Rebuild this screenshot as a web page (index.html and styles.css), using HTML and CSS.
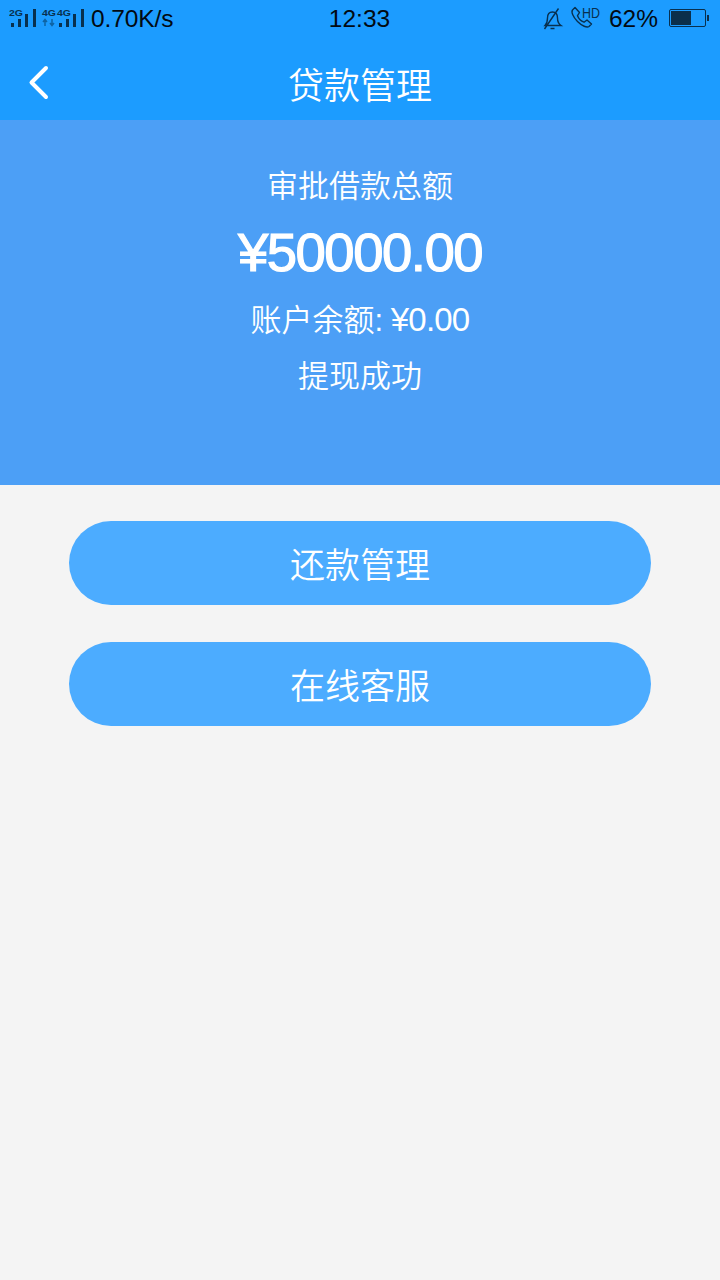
FILE: index.html
```html
<!DOCTYPE html>
<html lang="zh-CN">
<head>
  <meta charset="UTF-8" />
  <meta name="viewport" content="width=device-width, initial-scale=1.0"/>
  <title>贷款管理</title>
  <link rel="stylesheet" href="styles.css">
</head>
<body>
  <header class="top">
    <div class="status-bar">
      <div class="status-left">
        <svg class="signal" width="80" height="30" viewBox="0 0 80 30">
          <g fill="#08304f">
            <text x="0" y="12" textLength="14" lengthAdjust="spacingAndGlyphs">2G</text>
            <text x="33" y="12" textLength="14" lengthAdjust="spacingAndGlyphs">4G</text>
            <text x="48" y="12" textLength="14" lengthAdjust="spacingAndGlyphs">4G</text>
            <path d="M2 19h3v4H2zM9 15h3v8H9zM16 10h3v13h-3zM24 5h3v18h-3z"/>
            <path d="M50 19h3v4h-3zM57 15h3v8h-3zM64 10h3v13h-3zM72 5h3v18h-3z"/>
          </g>
          <path d="M36 22v-6M34 18l2-2.500 2 2.500M43 15v6M41 19l2 2.500 2-2.500" fill="none" stroke="#0e63a3" stroke-width="1.5"/>
        </svg>
        <span class="speed">0.70K/s</span>
      </div>
      <div class="clock">12:33</div>
      <div class="status-right">
        <svg class="bell" width="22" height="24" viewBox="0 0 22 24" fill="none" stroke="#08304f" stroke-width="1.4">
          <path d="M2 18.500c2-2 2.500-4 2.500-7.500 0-4 2-6 5-6s5 2 5 6c0 3.500.5 5.500 3.500 7.500zM15.500 1.500L1.500 22M7.500 21.500h4"/>
        </svg>
        <svg class="call" width="32" height="26" viewBox="0 0 32 26">
          <path d="M5 1.500L2.500 4c-1.500 2 .5 7 5 11.500s9.500 6.500 11.500 5l2.500-2.500-4.500-4-3 2.200c-2.500-1-5.500-4-6.500-6.500L9.500 6.500z" fill="none" stroke="#08304f" stroke-width="1.4" stroke-linejoin="round"/>
          <text x="12" y="11.500" textLength="18" lengthAdjust="spacingAndGlyphs" fill="#08304f">HD</text>
        </svg>
        <span class="percent">62%</span>
        <svg class="battery" width="41" height="20" viewBox="0 0 41 20">
          <rect x="0.500" y="0.500" width="36" height="17" rx="1.500" fill="none" stroke="#08304f"/>
          <path d="M2 2h20v14H2zM38 6h2v6h-2z" fill="#0b2f4b"/>
        </svg>
      </div>
    </div>
    <div class="nav">
      <svg class="back" width="24" height="36" viewBox="0 0 24 36" fill="none" stroke="#fff" stroke-width="4" stroke-linecap="round" stroke-linejoin="round">
        <path d="M19 4L4.500 18.500 19 33"/>
      </svg>
      <h1>贷款管理</h1>
    </div>
  </header>

  <section class="summary">
    <div class="label">审批借款总额</div>
    <div class="amount">¥50000.00</div>
    <div class="balance">账户余额: <span class="money">¥0.00</span></div>
    <div class="state">提现成功</div>
  </section>

  <main class="btn-group">
    <button>还款管理</button>
    <button>在线客服</button>
  </main>
</body>
</html>
```
FILE: styles.css
```css
:root {
  --bg: #f4f4f4;
  --header: #1c9cff;
  --panel: #4c9ff6;
  --accent: #4cacff;
}

* {
  box-sizing: border-box;
  margin: 0;
  padding: 0;
}

body {
  min-height: 1280px;
  font-family: 'Liberation Sans', 'Noto Sans CJK SC', sans-serif;
  font-weight: 350;
  background-color: var(--bg);
  color: white;
}

.top {
  height: 120px;
  background-color: var(--header);
}

.status-bar {
  height: 38px;
  display: grid;
  grid-template-columns: 1fr auto 1fr;
  align-items: center;
  padding: 0 10px 2px 9px;
  font-size: 24.5px;
  line-height: 36px;
  color: #020a12;
}

.status-left,
.status-right {
  display: flex;
  align-items: center;
}

.status-right {
  justify-content: flex-end;
}

.signal {
  font-size: 9.5px;
  font-weight: bold;
}

.speed {
  margin-left: 2px;
  letter-spacing: -0.1px;
}

.clock {
  padding-top: 1px;
}

.bell {
  margin-right: 5px;
}

.call {
  margin-right: 7px;
  font-size: 14px;
}

.percent {
  margin-right: 11px;
}

.nav {
  height: 82px;
  display: grid;
  grid-template-columns: 60px 1fr 60px;
  align-items: center;
}

.back {
  margin: 6px 0 0 27px;
}

h1 {
  padding-top: 15px;
  font-size: 36px;
  font-weight: 350;
  line-height: 52px;
  text-align: center;
}

.summary {
  height: 365px;
  padding-top: 43px;
  background-color: var(--panel);
  font-size: 31px;
  line-height: 48px;
  text-align: center;
}

.amount {
  height: 84px;
  font-size: 54.5px;
  line-height: 84px;
  letter-spacing: -1.5px;
  -webkit-text-stroke: 1.2px white;
}

.balance {
  height: 58px;
  line-height: 50px;
  word-spacing: -1px;
}

.money {
  font-size: 33px;
  letter-spacing: -0.8px;
}

.btn-group {
  display: flex;
  flex-direction: column;
  gap: 37px;
  padding: 36px 69px;
}

button {
  height: 84px;
  padding-bottom: 1px;
  border: none;
  border-radius: 42px;
  background-color: var(--accent);
  color: white;
  font-family: inherit;
  font-size: 35px;
  font-weight: 350;
  cursor: pointer;
}
```
